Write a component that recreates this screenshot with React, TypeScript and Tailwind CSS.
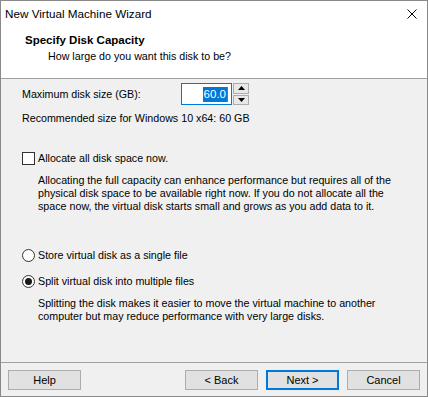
import React from 'react';

const FONT = { fontFamily: '"Liberation Sans", Arial, sans-serif' };

function Checkbox() {
  return <div className="w-[13px] h-[13px] border border-[#333333] bg-white shrink-0" />;
}

function Radio({ checked }: { checked?: boolean }) {
  return (
    <div className="w-[13px] h-[13px] rounded-full border border-[#333333] bg-white shrink-0 flex items-center justify-center">
      {checked && <div className="w-[7px] h-[7px] rounded-full bg-[#1a1a1a]" />}
    </div>
  );
}

function Arrow({ up }: { up?: boolean }) {
  return (
    <svg width="7" height="4" viewBox="0 0 7 4">
      {up ? <path d="M0 4 L3.5 0 L7 4 Z" fill="#000" /> : <path d="M0 0 L7 0 L3.5 4 Z" fill="#000" />}
    </svg>
  );
}

function Button({ label, primary }: { label: string; primary?: boolean }) {
  return (
    <button
      className={
        'w-[73px] h-[20px] bg-[#e1e1e1] text-[11px] text-black flex items-center justify-center ' +
        (primary ? 'border-2 border-[#0078d7]' : 'border border-[#adadad]')
      }
    >
      {label}
    </button>
  );
}

export default function App() {
  return (
    <div className="w-[428px] h-[397px] border border-[#8a8a8a] bg-[#f0f0f0] flex flex-col text-black" style={FONT}>
      {/* title bar + header */}
      <div className="bg-white h-[77px] flex flex-col">
        <div className="h-[26px] flex items-center justify-between pl-[4px] pr-[10px]">
          <span className="text-[11.7px]">New Virtual Machine Wizard</span>
          <svg width="10" height="10" viewBox="0 0 10 10">
            <path d="M0.5 0.5 L9.5 9.5 M9.5 0.5 L0.5 9.5" stroke="#000" strokeWidth="1" />
          </svg>
        </div>
        <div className="pl-[24px] pt-[7px] font-bold text-[11.5px] leading-[13px]">Specify Disk Capacity</div>
        <div className="pl-[47px] pt-[3px] text-[10.7px] leading-[13px]">How large do you want this disk to be?</div>
      </div>
      <div className="h-px bg-[#a0a0a0]" />

      {/* body */}
      <div className="flex-1 flex flex-col pl-[21px] text-[10.7px] leading-[13px]">
        <div className="mt-[4px] h-[22px] flex items-center">
          <span className="w-[159px]">Maximum disk size (GB):</span>
          <div className="w-[51px] h-[22px] border border-[#0078d7] bg-white flex items-center justify-end pr-[3px]">
            <span className="bg-[#0078d7] text-white text-[11.5px] leading-[15px] px-px">60.0</span>
            <span className="w-px h-[15px] bg-[#b8631b]" />
          </div>
          <div className="ml-px w-[16px] h-[22px] flex flex-col gap-px">
            <div className="flex-1 bg-[#e8e8e8] border border-[#adadad] flex items-center justify-center">
              <Arrow up />
            </div>
            <div className="flex-1 bg-[#e8e8e8] border border-[#adadad] flex items-center justify-center">
              <Arrow />
            </div>
          </div>
        </div>
        <div className="mt-[7px]">Recommended size for Windows 10 x64: 60 GB</div>

        <div className="mt-[27px] flex items-center gap-[3px]">
          <Checkbox />
          <span>Allocate all disk space now.</span>
        </div>
        <p className="mt-[9px] ml-[16px] whitespace-nowrap">
          Allocating the full capacity can enhance performance but requires all of the
          <br />
          physical disk space to be available right now. If you do not allocate all the
          <br />
          space now, the virtual disk starts small and grows as you add data to it.
        </p>

        <div className="mt-[36px] flex items-center gap-[3px]">
          <Radio />
          <span>Store virtual disk as a single file</span>
        </div>
        <div className="mt-[13px] flex items-center gap-[3px]">
          <Radio checked />
          <span>Split virtual disk into multiple files</span>
        </div>
        <p className="mt-[9px] ml-[16px] whitespace-nowrap">
          Splitting the disk makes it easier to move the virtual machine to another
          <br />
          computer but may reduce performance with very large disks.
        </p>
      </div>

      <div className="h-px bg-[#a0a0a0]" />
      <div className="h-[33px] flex pt-[7px] pl-[7px] pr-[7px]">
        <Button label="Help" />
        <div className="flex-1" />
        <div className="flex gap-[8px]">
          <Button label="< Back" />
          <Button label="Next >" primary />
          <Button label="Cancel" />
        </div>
      </div>
    </div>
  );
}
